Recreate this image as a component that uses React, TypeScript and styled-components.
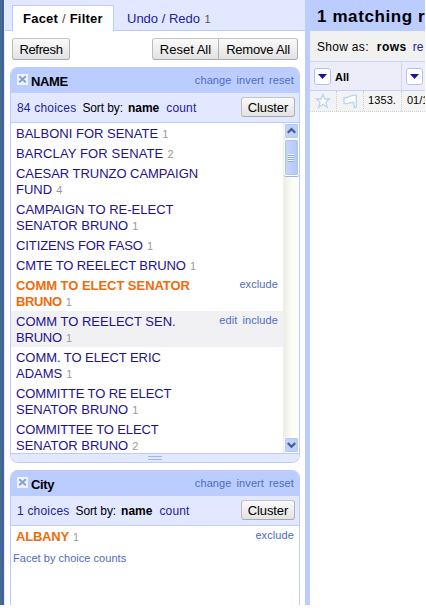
import React from "react";
import styled, { createGlobalStyle } from "styled-components";

const Global = createGlobalStyle`
  * { box-sizing: border-box; }
  html, body { margin: 0; padding: 0; background: #fff; overflow: hidden; }
  body { font-family: "Liberation Sans", Arial, sans-serif; font-size: 13px; color: #000; }
`;

const Page = styled.div`
  display: flex;
  width: 425px;
  height: 605px;
  overflow: hidden;
  white-space: nowrap;
`;
const WindowEdge = styled.div`
  flex: 0 0 5px;
  background: linear-gradient(90deg, #46698c 0 1px, #4a6c98 1px 2px, #3c5a9c 2px 3px, #4664b4 3px 4px, #e4eaff 4px 5px);
`;
const Side = styled.div`
  flex: 0 0 300px;
  display: flex;
  flex-direction: column;
`;
const Tabs = styled.div`
  flex: 0 0 31px;
  display: flex;
  background: #e2e8ff;
  box-shadow: inset 0 -1px #bbccff;
  padding: 5px 0 0 7px;
`;
const Tab = styled.div<{ $active?: boolean }>`
  width: ${p => (p.$active ? 102 : 110)}px;
  padding: 5px 0 0 ${p => (p.$active ? 10 : 12)}px;
  line-height: 16px;
  letter-spacing: ${p => (p.$active ? 0.23 : 0)}px;
  font-weight: ${p => (p.$active ? "bold" : "normal")};
  color: ${p => (p.$active ? "#000" : "#22229c")};
  border: ${p => (p.$active ? "1px solid #bbccff" : "1px solid transparent")};
  border-bottom: 0;
  background: ${p => (p.$active ? "#fff" : "transparent")};
`;
const Thin = styled.span`font-weight: normal; color: #444;`;
const Count = styled.span<{ $dark?: boolean }>`
  font-size: 11px;
  font-weight: normal;
  letter-spacing: 0;
  margin-left: 1px;
  color: ${p => (p.$dark ? "#555" : "#999")};
`;
const Controls = styled.div`
  flex: 0 0 36px;
  display: flex;
  padding: 7px 7px 0 7px;
`;
const Push = styled.div`flex: 1;`;
const Button = styled.div<{ $w: number; $h?: number; $join?: "left" | "right"; $ls?: number }>`
  width: ${p => p.$w}px;
  height: ${p => p.$h ?? 22}px;
  line-height: ${p => (p.$h ?? 22) - 1}px;
  letter-spacing: ${p => p.$ls ?? 0}px;
  text-align: center;
  border: 1px solid #b4b4b4;
  border-color: #c4c4c4 #b2b2b2 #aaa #bcbcbc;
  border-left-width: ${p => (p.$join === "right" ? 0 : 1)}px;
  border-radius: ${p => (p.$join === "left" ? "3px 0 0 3px" : p.$join === "right" ? "0 3px 3px 0" : "3px")};
  background: linear-gradient(#fafafa, #e2e2e2);
`;
const Facet = styled.div<{ $h: number }>`
  flex: 0 0 ${p => p.$h}px;
  width: 290px;
  margin: 0 0 7px 5px;
  display: flex;
  flex-direction: column;
  border: 1px solid #bbccff;
  border-top: 0;
  border-radius: 8px;
  overflow: hidden;
`;
const FacetHead = styled.div`
  flex: 0 0 26px;
  display: flex;
  background: #bbccff;
  padding: 6px 5px 0 6px;
`;
const CloseBox = styled.svg`width: 11px; height: 11px; margin-top: 1px; display: block;`;
const FacetName = styled.div<{ $ls: number }>`
  font-weight: bold;
  line-height: 18px;
  margin-left: 3px;
  letter-spacing: ${p => p.$ls}px;
`;
const Actions = styled.div<{ $ls?: number }>`
  display: flex;
  gap: 5px;
  margin-left: auto;
  font-size: 11px;
  line-height: 14px;
  letter-spacing: ${p => p.$ls ?? 0.1}px;
  color: #4c6cc4;
`;
const SortBar = styled.div`
  flex: 0 0 30px;
  display: flex;
  background: #e2e8ff;
  border-bottom: 1px solid #bbccff;
  padding: 4px 4px 0 6px;
`;
const SortText = styled.div<{ $gap?: number; $color?: string; $bold?: boolean; $ls?: number }>`
  font-size: 12px;
  line-height: 14px;
  padding-top: 4px;
  margin-right: ${p => p.$gap ?? 0}px;
  color: ${p => p.$color ?? "#000"};
  font-weight: ${p => (p.$bold ? "bold" : "normal")};
  letter-spacing: ${p => p.$ls ?? 0}px;
`;
const Body = styled.div`flex: 1; display: flex; min-height: 0; background: #fff;`;
const List = styled.div`flex: 1; overflow: hidden;`;
const Item = styled.div<{ $hover?: boolean }>`
  display: flex;
  padding: 2px 5px 2px 5px;
  background: ${p => (p.$hover ? "#f1f1f3" : "transparent")};
`;
const ItemText = styled.div<{ $picked?: boolean }>`
  line-height: 16px;
  padding-top: 1px;
  margin-bottom: -1px;
  white-space: pre;
  color: ${p => (p.$picked ? "#ee6c0c" : "#22128c")};
  font-weight: ${p => (p.$picked ? "bold" : "normal")};
`;
const Line = styled.div<{ $ls?: number }>`letter-spacing: ${p => p.$ls ?? 0}px;`;
const Scroll = styled.div`
  flex: 0 0 16px;
  display: flex;
  flex-direction: column;
  align-items: center;
  background: linear-gradient(90deg, #eeeeea 0 2px, #f3f3ec 4px, #fdfdf8 9px, #fefefa);
`;
const Arrow = styled.svg`width: 15px; height: 16px; display: block;`;
const Thumb = styled.div`
  width: 15px;
  height: 37px;
  border: 1px solid #fff;
  border-radius: 2px;
  background: linear-gradient(90deg, #c6d6fd, #b3c7f8);
  box-shadow: 0 1px #9fb4e0, inset 0 0 0 1px #b0c4f4;
  display: flex;
  flex-direction: column;
  align-items: center;
  justify-content: center;
`;
const Grip = styled.div`width: 6px; height: 8px; background: repeating-linear-gradient(#eef4ff 0 1px, #8cabec 1px 2px);`;
const Resize = styled.div`
  flex: 0 0 9px;
  background: #e2e8ff;
  border-top: 1px solid #bbccff;
  display: flex;
  justify-content: center;
  padding-top: 2px;
`;
const Bars = styled.div`width: 14px; height: 4px; border: solid #9cb4ee; border-width: 1px 0;`;
const ByCount = styled.div`
  font-size: 11px;
  line-height: 14px;
  letter-spacing: 0.03px;
  padding: 5px 0 0 2px;
  color: #4c6cc4;
`;
const Splitter = styled.div`flex: 0 0 5px; background: #bbccff;`;
const Main = styled.div`flex: 1; min-width: 0; overflow: hidden;`;
const Title = styled.div`
  height: 31px;
  background: #bbccff;
  padding: 7px 0 0 7px;
  font-size: 17px;
  line-height: 20px;
  letter-spacing: 0.6px;
  font-weight: bold;
`;
const View = styled.div`
  height: 31px;
  display: flex;
  background: #f1f1f1;
  border-bottom: 1px solid #c8d3f8;
  padding: 5px 0 0 7px;
`;
const HeadRow = styled.div`
  height: 29px;
  display: flex;
  background: #ecedf9;
  border-bottom: 1px solid #c3cff8;
`;
const HeadCell = styled.div<{ $w: number }>`
  flex: 0 0 ${p => p.$w}px;
  display: flex;
  align-items: center;
  gap: 4px;
  padding-left: 4px;
  border-right: 1px solid #ccd6f6;
  font-size: 11px;
  font-weight: bold;
`;
const HeadName = styled.span`padding-top: 2px;`;
const Drop = styled.svg`width: 17px; height: 17px; display: block;`;
const DataRow = styled.div`
  height: 21px;
  display: flex;
  background: #f3f3f3;
  border-bottom: 1px dotted #d2d2d2;
`;
const Cell = styled.div<{ $w: number; $pad: number; $ls?: number }>`
  flex: 0 0 ${p => p.$w}px;
  padding: 2px 0 0 ${p => p.$pad}px;
  border-right: 1px dotted #ccc;
  font-size: 11px;
  line-height: 15px;
  letter-spacing: ${p => p.$ls ?? 0.1}px;
`;
const Mark = styled.svg`width: 16px; height: 16px; display: block;`;

const Close = () => (
  <CloseBox viewBox="0 0 11 11">
    <rect width="11" height="11" fill="#eff4ff" />
    <path d="M2.2 2.2 8.8 8.3M8.8 2.2 2.2 8.3" stroke="#839fdc" strokeWidth="1.9" />
  </CloseBox>
);
const ScrollArrow = ({ up }: { up?: boolean }) => (
  <Arrow viewBox="0 0 15 16">
    <rect x=".5" y=".5" width="14" height="15" rx="2" fill="#c0d1fc" stroke="#fff" />
    <rect x="1.5" y="1.5" width="12" height="13" rx="1" fill="none" stroke="#b3c6f6" />
    <path d={up ? "M3.8 9.7 7.5 6 11.2 9.7" : "M3.8 6 7.5 9.7 11.2 6"} fill="none" stroke="#465c8c" strokeWidth="2.2" />
  </Arrow>
);
const DropIcon = () => (
  <Drop viewBox="0 0 17 17">
    <rect x=".5" y=".5" width="16" height="16" rx="2.5" fill="#fff" stroke="#b3c1f2" />
    <path d="M4 6H13L8.5 11Z" fill="#1b12a0" />
  </Drop>
);

type Choice = { lines: string[]; count: number; picked?: boolean; hover?: boolean; actions?: string[]; ls?: number[] };
const names: Choice[] = [
  { lines: ["BALBONI FOR SENATE"], count: 1 },
  { lines: ["BARCLAY FOR SENATE"], count: 2, ls: [0.12] },
  { lines: ["CAESAR TRUNZO CAMPAIGN", "FUND"], count: 4, ls: [-0.04, 0] },
  { lines: ["CAMPAIGN TO RE-ELECT", "SENATOR BRUNO"], count: 1 },
  { lines: ["CITIZENS FOR FASO"], count: 1, ls: [-0.1] },
  { lines: ["CMTE TO REELECT BRUNO"], count: 1, ls: [-0.1] },
  { lines: ["COMM TO ELECT SENATOR", "BRUNO"], count: 1, picked: true, actions: ["exclude"], ls: [-0.04, -0.4] },
  { lines: ["COMM TO REELECT SEN.", "BRUNO"], count: 1, hover: true, actions: ["edit", "include"], ls: [0, -0.2] },
  { lines: ["COMM. TO ELECT ERIC", "ADAMS"], count: 1, ls: [-0.06, 0] },
  { lines: ["COMMITTE TO RE ELECT", "SENATOR BRUNO"], count: 1, ls: [-0.12, 0] },
  { lines: ["COMMITTEE TO ELECT", "SENATOR BRUNO"], count: 2, ls: [-0.12, 0] },
];

const ChoiceRow = ({ c }: { c: Choice }) => (
  <Item $hover={c.hover}>
    <ItemText $picked={c.picked}>
      {c.lines.map((l, i) => (
        <Line key={l} $ls={c.ls?.[i]}>
          {l}
          {i === c.lines.length - 1 && <Count> {c.count}</Count>}
        </Line>
      ))}
    </ItemText>
    {c.actions && <Actions>{c.actions.map(a => <span key={a}>{a}</span>)}</Actions>}
  </Item>
);

const FacetTop = ({ name, choices, ls }: { name: string; choices: number; ls: number }) => (
  <>
    <FacetHead>
      <Close />
      <FacetName $ls={ls}>{name}</FacetName>
      <Actions><span>change</span><span>invert</span><span>reset</span></Actions>
    </FacetHead>
    <SortBar>
      <SortText $color="#22229c" $gap={6} $ls={0.2}>{choices} choices</SortText>
      <SortText $gap={5} $ls={-0.1}>Sort by:</SortText>
      <SortText $bold $gap={7}>name</SortText>
      <SortText $color="#22229c" $ls={0.15}>count</SortText>
      <Push />
      <Button $w={54} $h={20} $ls={-0.1}>Cluster</Button>
    </SortBar>
  </>
);

export default function App() {
  return (
    <>
      <Global />
      <Page>
        <WindowEdge />
        <Side>
          <Tabs>
            <Tab $active>Facet <Thin>/</Thin> Filter</Tab>
            <Tab>Undo / Redo <Count $dark>1</Count></Tab>
          </Tabs>
          <Controls>
            <Button $w={58} $ls={-0.35}>Refresh</Button>
            <Push />
            <Button $w={67} $join="left">Reset All</Button>
            <Button $w={79} $join="right" $ls={-0.2}>Remove All</Button>
          </Controls>
          <Facet $h={396}>
            <FacetTop name="NAME" choices={84} ls={-0.4} />
            <Body>
              <List>{names.map(c => <ChoiceRow key={c.lines.join()} c={c} />)}</List>
              <Scroll>
                <ScrollArrow up />
                <Thumb><Grip /></Thumb>
                <Push />
                <ScrollArrow />
              </Scroll>
            </Body>
            <Resize><Bars /></Resize>
          </Facet>
          <Facet $h={150}>
            <FacetTop name="City" choices={1} ls={-0.4} />
            <Body>
              <List>
                <ChoiceRow c={{ lines: ["ALBANY"], count: 1, picked: true, actions: ["exclude"], ls: [-0.2] }} />
                <ByCount>Facet by choice counts</ByCount>
              </List>
            </Body>
          </Facet>
        </Side>
        <Splitter />
        <Main>
          <Title>1 matching r</Title>
          <View>
            <SortText $gap={8} $ls={0.3}>Show as:</SortText>
            <SortText $bold $gap={6} $ls={0.5}>rows</SortText>
            <SortText $color="#22229c">re</SortText>
          </View>
          <HeadRow>
            <HeadCell $w={92}><DropIcon /><HeadName>All</HeadName></HeadCell>
            <HeadCell $w={92}><DropIcon /></HeadCell>
          </HeadRow>
          <DataRow>
            <Cell $w={27} $pad={5}>
              <Mark viewBox="0 0 16 16"><path d="M8 1.5 9.9 6H14.5L10.9 9.2 12.2 14.2 8 11.4 3.8 14.2 5.1 9.2 1.5 6H6.1Z" fill="#fff" stroke="#b9d3f4" strokeWidth="1.3" /></Mark>
            </Cell>
            <Cell $w={27} $pad={5}>
              <Mark viewBox="0 0 16 16"><path d="M2 4.5C5 6 8 1.5 14.3 2.3V13.7L12.3 14.5 11.6 9.5C8 8.5 5.5 12 2 10.2Z" fill="#fff" stroke="#b9d3f4" strokeWidth="1.3" /></Mark>
            </Cell>
            <Cell $w={38} $pad={4}>1353.</Cell>
            <Cell $w={92} $pad={5} $ls={0}>01/1</Cell>
          </DataRow>
        </Main>
      </Page>
    </>
  );
}
